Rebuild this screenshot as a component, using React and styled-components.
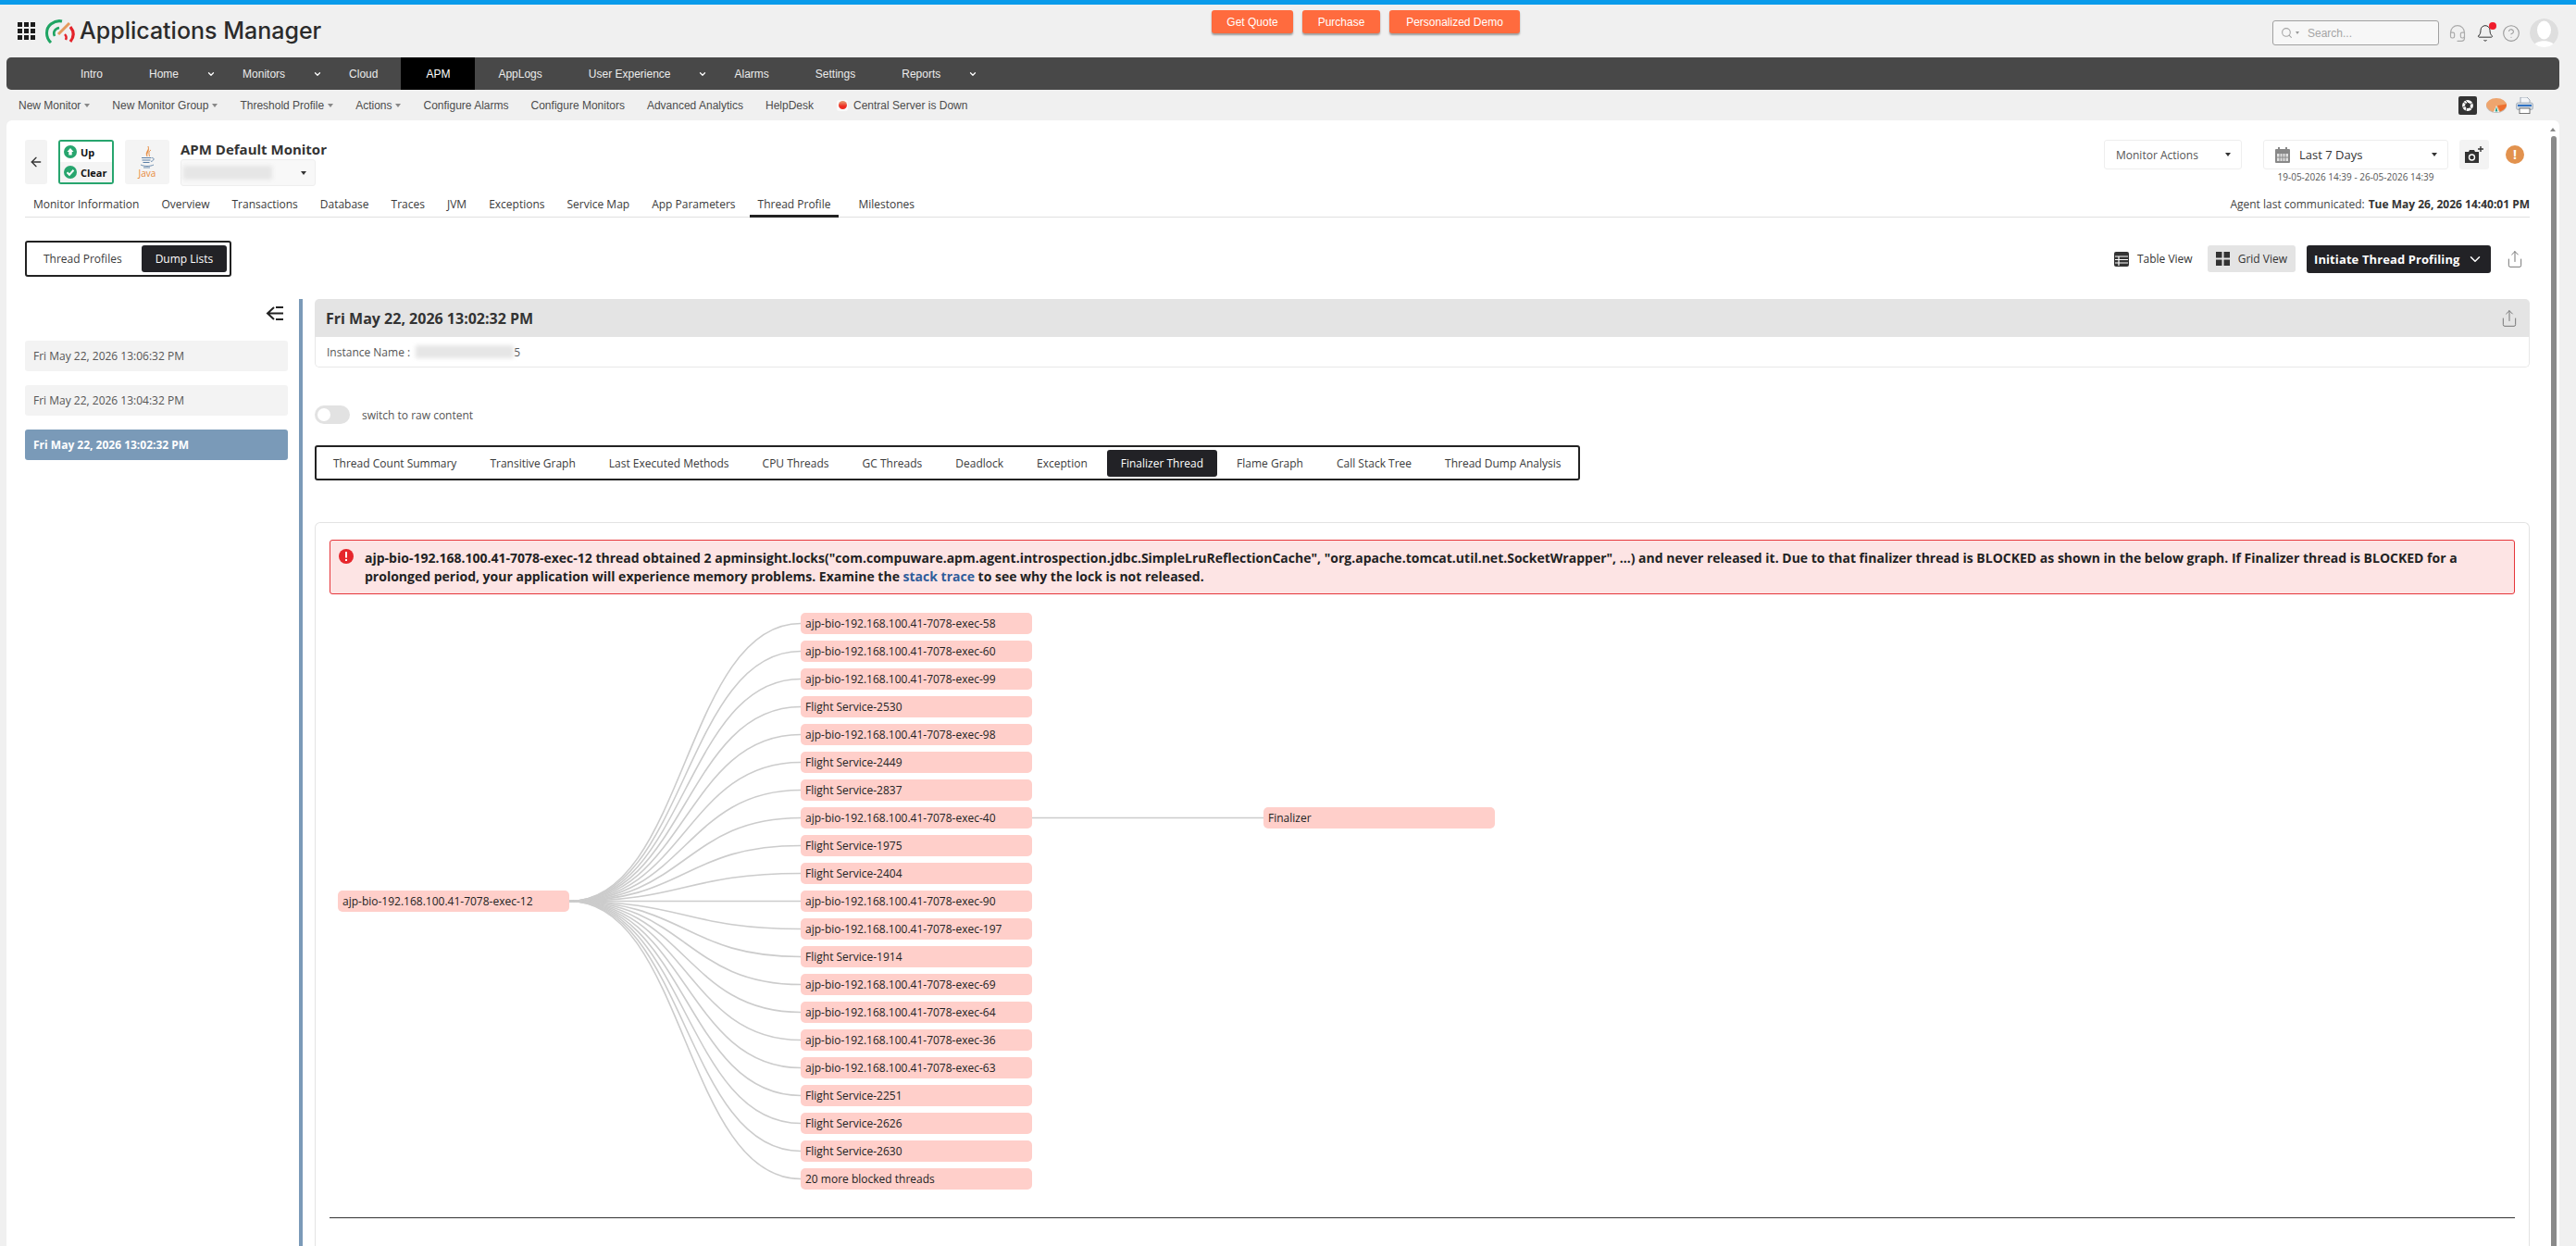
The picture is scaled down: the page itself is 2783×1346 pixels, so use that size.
import styled, { createGlobalStyle } from "styled-components";
import {
  ArrowLeft,
  Bell,
  ChevronDown,
  CircleHelp,
  Headset,
  Search,
  Share,
} from "lucide-react";

const GlobalStyle = createGlobalStyle`
  html, body {
    margin: 0;
    height: 100%;
    overflow: hidden;
  }
  body {
    font-family: "Open Sans", "Noto Sans", sans-serif;
    font-size: 12px;
    color: #333;
    background: #f0f0f0;
  }
  * {
    box-sizing: border-box;
  }
`;

const Page = styled.div`
  height: 1346px;
  display: flex;
  flex-direction: column;
  border-top: 5px solid #0a9bea;
  background: #f0f0f0;
`;

const Header = styled.header`
  height: 57px;
  flex: none;
  position: relative;
  display: flex;
  align-items: flex-start;
  justify-content: space-between;
`;

const Brand = styled.div`
  display: flex;
  align-items: center;
  padding: 13px 0 0 18px;
  gap: 11px;
`;

const BrandName = styled.div`
  font-family: Inter, "Liberation Sans", sans-serif;
  font-size: 25px;
  line-height: 30px;
  font-weight: 500;
  color: #2b2b2b;
  margin-left: -6px;
`;

const QuoteButtons = styled.div`
  position: absolute;
  left: 1309px;
  top: 6px;
  display: flex;
  gap: 10px;
`;

const QuoteButton = styled.button`
  height: 25px;
  width: ${(p) => p.$w}px;
  border: 0;
  border-radius: 3px;
  background: #ff6b3e;
  box-shadow: 0 2px 2px rgba(0, 0, 0, 0.35);
  color: #fff;
  font-family: "Liberation Sans", sans-serif;
  font-size: 12px;
  padding: 0;
`;

const Tools = styled.div`
  display: flex;
  align-items: center;
  padding: 15px 19px 0 0;
`;

const SearchBox = styled.div`
  width: 180px;
  height: 27px;
  border: 1px solid #a0a0a0;
  border-radius: 3px;
  background: #f7f7f7;
  display: flex;
  align-items: center;
  gap: 3px;
  padding-left: 8px;
  color: #a5a5a5;
  font-family: "Liberation Sans", sans-serif;
  font-size: 12px;
  margin-right: 10px;
`;

const SearchCaret = styled.i`
  width: 0;
  height: 0;
  margin-right: 6px;
  border-left: 2.5px solid transparent;
  border-right: 2.5px solid transparent;
  border-top: 3px solid #999;
`;

const ToolIcon = styled.span`
  position: relative;
  width: 20px;
  margin-right: ${(p) => p.$gap}px;
  display: flex;
  justify-content: center;
  color: ${(p) => p.$color};
`;

const BellDot = styled.i`
  position: absolute;
  right: -2px;
  top: -2px;
  width: 8px;
  height: 8px;
  border-radius: 50%;
  background: #f01c2c;
`;

const Avatar = styled.span`
  width: 31px;
  height: 31px;
  border-radius: 50%;
  overflow: hidden;
  display: block;
`;

const NavBar = styled.nav`
  height: 35px;
  flex: none;
  margin: 0 18px 0 7px;
  padding-left: 55px;
  background: #484848;
  border-radius: 5px;
  display: flex;
  align-items: stretch;
  font-family: "Liberation Sans", sans-serif;
  font-size: 12px;
  color: #f0f0f0;
`;

const NavItem = styled.div`
  display: flex;
  align-items: center;
  padding: 0 ${(p) => (p.$active ? 27 : 25)}px;
  background: ${(p) => (p.$active ? "#000" : "transparent")};
  color: ${(p) => (p.$active ? "#fff" : "#ececec")};
`;

const NavCaret = styled.div`
  width: 19px;
  display: flex;
  align-items: center;
  justify-content: center;
  color: #fff;
`;

const SubBar = styled.div`
  height: 33px;
  flex: none;
  padding: 0 46px 0 20px;
  display: flex;
  align-items: center;
  gap: 24px;
  font-family: "Liberation Sans", sans-serif;
  font-size: 12px;
  color: #4c4c4c;
`;

const SubItem = styled.div`
  display: flex;
  align-items: center;
  gap: 4px;
  white-space: nowrap;
`;

const SmallCaret = styled.i`
  width: 0;
  height: 0;
  border-left: 3.5px solid transparent;
  border-right: 3.5px solid transparent;
  border-top: 4px solid ${(p) => p.$color || "#888"};
`;

const ServerDot = styled.i`
  width: 12px;
  height: 12px;
  margin: 0 2px 0 1px;
  padding: 1.5px;
  border-radius: 3px;
  background: #fafafa;
  &::before {
    content: "";
    display: block;
    width: 9px;
    height: 9px;
    border-radius: 50%;
    background: linear-gradient(#e9926c 10%, #ee2a20 65%);
  }
`;

const SubIcons = styled.div`
  margin-left: auto;
  display: flex;
  align-items: center;
  gap: 10px;
`;

const Panel = styled.main`
  flex: 1;
  min-height: 0;
  position: relative;
  overflow: hidden;
  margin: 0 18px 0 7px;
  padding: 21px 32px 0 20px;
  background: #fff;
  border-radius: 6px 6px 0 0;
  display: flex;
  flex-direction: column;
`;

const ScrollArrow = styled.i`
  position: absolute;
  right: 4px;
  top: 8px;
  border-left: 3px solid transparent;
  border-right: 3px solid transparent;
  border-bottom: 4px solid #888;
`;

const ScrollBar = styled.div`
  position: absolute;
  right: 3px;
  top: 17px;
  bottom: 0;
  width: 6px;
  background: #8a8a8a;
  border-radius: 3px 3px 0 0;
`;

const MonitorHead = styled.div`
  height: 50px;
  flex: none;
  display: flex;
  justify-content: space-between;
`;

const HeadLeft = styled.div`
  display: flex;
  align-items: flex-start;
`;

const BackButton = styled.div`
  width: 24px;
  height: 48px;
  border-radius: 3px;
  background: #f3f3f3;
  color: #333;
  display: flex;
  align-items: center;
  justify-content: center;
  margin-right: 12px;
`;

const StatusBox = styled.div`
  width: 60px;
  height: 48px;
  border: 2px solid #27a56e;
  border-radius: 3px;
  margin-right: 12px;
  overflow: hidden;
`;

const StatusRow = styled.div`
  height: 22px;
  display: flex;
  align-items: center;
  gap: 4px;
  padding-left: 4px;
  font-size: 11px;
  font-weight: 700;
  color: #111;
  background: ${(p) => (p.$shade ? "#f4f4f4" : "#fff")};
`;

const JavaBox = styled.div`
  width: 48px;
  height: 48px;
  border-radius: 3px;
  background: #f4f4f4;
  margin-right: 12px;
  display: flex;
  flex-direction: column;
  align-items: center;
  padding-top: 7px;
`;

const JavaLabel = styled.span`
  font-size: 10px;
  line-height: 10px;
  font-weight: 500;
  color: #e8893a;
`;

const MonitorTitle = styled.div`
  font-size: 15px;
  line-height: 18px;
  font-weight: 700;
  color: #333;
  margin: 1px 0 2px;
`;

const MonitorSelect = styled.div`
  width: 146px;
  height: 29px;
  border: 1px solid #eee;
  border-radius: 3px;
  background: #f8f8f8;
  display: flex;
  align-items: center;
  justify-content: space-between;
  padding: 0 9px 0 2px;
`;

const Blurred = styled.span`
  display: block;
  width: ${(p) => p.$w}px;
  height: ${(p) => p.$h}px;
  background: #e6e6e6;
  filter: blur(2px);
`;

const HeadRight = styled.div`
  display: flex;
  align-items: flex-start;
`;

const SelectBox = styled.div`
  width: ${(p) => p.$w}px;
  height: 32px;
  border: 1px solid #eee;
  border-radius: 3px;
  display: flex;
  align-items: center;
  gap: 10px;
  padding: 0 11px 0 12px;
  font-size: ${(p) => p.$size || 12}px;
  color: ${(p) => p.$color || "#555"};
`;

const Grow = styled.span`
  flex: 1;
`;

const DateColumn = styled.div`
  display: flex;
  flex-direction: column;
  align-items: center;
  margin-left: 23px;
`;

const DateRange = styled.div`
  font-size: 10px;
  line-height: 14px;
  margin-top: 1px;
  color: #555;
`;

const CameraButton = styled.div`
  width: 32px;
  height: 32px;
  margin-left: 12px;
  padding: 6px;
  border-radius: 3px;
  background: #f3f3f3;
  display: flex;
`;

const WarnDot = styled.div`
  width: 20px;
  height: 20px;
  margin: 6px 6px 0 18px;
  border-radius: 50%;
  background: #e2924e;
  color: #fff;
  font-size: 14px;
  line-height: 20px;
  font-weight: 700;
  text-align: center;
`;

const TabsRow = styled.div`
  margin-top: 6px;
  height: 28px;
  flex: none;
  border-bottom: 1px solid #e0e0e0;
  display: flex;
  align-items: stretch;
`;

const MonitorTab = styled.div`
  display: flex;
  align-items: center;
  padding: 2px 9px 0;
  margin-right: ${(p) => (p.$active ? 12 : 6)}px;
  height: 28px;
  font-size: 12px;
  color: #3a3a3a;
  white-space: nowrap;
  border-bottom: 3px solid ${(p) => (p.$active ? "#222" : "transparent")};
`;

const AgentText = styled.div`
  margin-left: auto;
  display: flex;
  align-items: center;
  gap: 4px;
  color: #444;
  font-size: 12px;
  b {
    color: #333;
    font-weight: 700;
  }
`;

const ToolRow = styled.div`
  margin-top: 25px;
  height: 39px;
  flex: none;
  display: flex;
  align-items: center;
  justify-content: space-between;
`;

const Segments = styled.div`
  display: flex;
  width: fit-content;
  align-items: center;
  height: ${(p) => p.$h}px;
  padding: 0 3px;
  border: 2px solid #222;
  border-radius: 3px;
  gap: 6px;
`;

const Segment = styled.div`
  height: 29px;
  padding: 0 15px;
  border-radius: 3px;
  display: flex;
  align-items: center;
  white-space: nowrap;
  font-size: 12px;
  background: ${(p) => (p.$active ? "#222226" : "transparent")};
  color: ${(p) => (p.$active ? "#fff" : "#3a3a3a")};
`;

const ViewTools = styled.div`
  display: flex;
  align-items: center;
`;

const ViewButton = styled.div`
  height: 29px;
  display: flex;
  align-items: center;
  gap: 9px;
  padding: 0 9px;
  margin-right: ${(p) => p.$gap}px;
  border-radius: 3px;
  font-size: 12px;
  color: #333;
  background: ${(p) => (p.$active ? "#e4e4e4" : "transparent")};
`;

const InitiateButton = styled.div`
  width: 199px;
  height: 30px;
  border-radius: 3px;
  background: #222226;
  color: #fff;
  font-size: 13px;
  letter-spacing: 0.1px;
  font-weight: 700;
  display: flex;
  align-items: center;
  justify-content: space-between;
  padding: 0 8px;
`;

const ShareWrap = styled.span`
  display: flex;
  color: #777;
  margin-left: ${(p) => p.$left || 0}px;
  margin-right: ${(p) => p.$right || 0}px;
`;

const Workspace = styled.div`
  margin-top: 24px;
  flex: 1;
  min-height: 0;
  display: flex;
  align-items: stretch;
`;

const Sidebar = styled.aside`
  width: 284px;
  flex: none;
  margin-right: 12px;
`;

const CollapseRow = styled.div`
  height: 45px;
  display: flex;
  justify-content: flex-end;
  padding: 7px 4px 0 0;
`;

const DumpItem = styled.div`
  height: 33px;
  margin-bottom: 15px;
  padding-left: 9px;
  border-radius: 3px;
  display: flex;
  align-items: center;
  font-size: 12px;
  font-weight: ${(p) => (p.$active ? 700 : 400)};
  background: ${(p) => (p.$active ? "#7a9ab8" : "#f3f3f3")};
  color: ${(p) => (p.$active ? "#fff" : "#555")};
`;

const Detail = styled.section`
  flex: 1;
  min-width: 0;
  border-left: 4px solid #7b9ab8;
  padding-left: 13px;
  display: flex;
  flex-direction: column;
`;

const DetailHead = styled.div`
  height: 41px;
  flex: none;
  padding: 0 12px;
  background: #e4e4e4;
  border-radius: 5px 5px 0 0;
  display: flex;
  align-items: center;
  justify-content: space-between;
  font-size: 16px;
  font-weight: 700;
  color: #333;
`;

const InstanceRow = styled.div`
  height: 33px;
  flex: none;
  padding: 0 12px;
  border: 1px solid #e8e8e8;
  border-top: 0;
  border-radius: 0 0 5px 5px;
  display: flex;
  align-items: center;
  gap: 6px;
  font-size: 12px;
  color: #555;
`;

const InstanceTail = styled.span`
  margin-left: -6px;
`;

const SwitchRow = styled.div`
  margin-top: 41px;
  height: 20px;
  flex: none;
  display: flex;
  align-items: center;
  gap: 13px;
  font-size: 12px;
  color: #555;
`;

const SwitchTrack = styled.div`
  width: 38px;
  height: 20px;
  padding: 3px;
  border-radius: 10px;
  background: #e2e2e2;
`;

const SwitchKnob = styled.div`
  width: 14px;
  height: 14px;
  border-radius: 50%;
  background: #fff;
`;

const AnalysisTabs = styled.div`
  margin-top: 23px;
  flex: none;
`;

const GraphCard = styled.div`
  margin-top: 45px;
  flex: 1;
  min-height: 0;
  padding: 18px 15px 0;
  border: 1px solid #e3e3e3;
  border-bottom: 0;
  border-radius: 6px 6px 0 0;
`;

const AlertBox = styled.div`
  height: 59px;
  padding: 0 10px 0 37px;
  position: relative;
  display: flex;
  align-items: center;
  background: #fde4e4;
  border: 1px solid #e6353a;
  border-radius: 3px;
  font-size: 14px;
  line-height: 20px;
  font-weight: 700;
  color: #222;
  a {
    color: #2f5d9b;
  }
`;

const AlertIcon = styled.svg`
  position: absolute;
  left: 9px;
  top: 9px;
`;

const Graph = styled.div`
  position: relative;
  margin-top: 20px;
  padding-left: 9px;
  display: flex;
  gap: 250px;
`;

const Links = styled.svg`
  position: absolute;
  left: 9px;
  top: 0;
  z-index: 0;
`;

const NodeColumn = styled.div`
  width: 250px;
  position: relative;
  z-index: 1;
  display: flex;
  flex-direction: column;
  gap: 7px;
  justify-content: ${(p) => (p.$center ? "center" : "flex-start")};
  padding-top: ${(p) => p.$top || 0}px;
`;

const Node = styled.div`
  height: 23px;
  padding-left: 5px;
  display: flex;
  align-items: center;
  border-radius: 5px;
  background: #ffcfca;
  font-size: 12px;
  color: #222;
  white-space: nowrap;
`;

const Divider = styled.div`
  margin-top: 30px;
  height: 1px;
  background: #333;
`;

const navItems = [
  { label: "Intro" },
  { label: "Home", caret: true },
  { label: "Monitors", caret: true },
  { label: "Cloud" },
  { label: "APM", active: true },
  { label: "AppLogs" },
  { label: "User Experience", caret: true },
  { label: "Alarms" },
  { label: "Settings" },
  { label: "Reports", caret: true },
];

const subItems = [
  { label: "New Monitor", caret: true },
  { label: "New Monitor Group", caret: true },
  { label: "Threshold Profile", caret: true },
  { label: "Actions", caret: true },
  { label: "Configure Alarms" },
  { label: "Configure Monitors" },
  { label: "Advanced Analytics" },
  { label: "HelpDesk" },
];

const monitorTabs = [
  "Monitor Information",
  "Overview",
  "Transactions",
  "Database",
  "Traces",
  "JVM",
  "Exceptions",
  "Service Map",
  "App Parameters",
  "Thread Profile",
  "Milestones",
];

const analysisTabs = [
  "Thread Count Summary",
  "Transitive Graph",
  "Last Executed Methods",
  "CPU Threads",
  "GC Threads",
  "Deadlock",
  "Exception",
  "Finalizer Thread",
  "Flame Graph",
  "Call Stack Tree",
  "Thread Dump Analysis",
];

const blockedThreads = [
  "ajp-bio-192.168.100.41-7078-exec-58",
  "ajp-bio-192.168.100.41-7078-exec-60",
  "ajp-bio-192.168.100.41-7078-exec-99",
  "Flight Service-2530",
  "ajp-bio-192.168.100.41-7078-exec-98",
  "Flight Service-2449",
  "Flight Service-2837",
  "ajp-bio-192.168.100.41-7078-exec-40",
  "Flight Service-1975",
  "Flight Service-2404",
  "ajp-bio-192.168.100.41-7078-exec-90",
  "ajp-bio-192.168.100.41-7078-exec-197",
  "Flight Service-1914",
  "ajp-bio-192.168.100.41-7078-exec-69",
  "ajp-bio-192.168.100.41-7078-exec-64",
  "ajp-bio-192.168.100.41-7078-exec-36",
  "ajp-bio-192.168.100.41-7078-exec-63",
  "Flight Service-2251",
  "Flight Service-2626",
  "Flight Service-2630",
  "20 more blocked threads",
];

const ROW = 30;
const rowY = (i) => 11.5 + ROW * i;
const rootY = rowY(10);

const AppGrid = () => (
  <svg width="20" height="20" viewBox="0 0 20 20" fill="#1c1c1c">
    {[0, 7, 14].map((y) =>
      [0, 7, 14].map((x) => <rect key={`${x}-${y}`} x={x + 1} y={y + 1} width="5" height="5" />)
    )}
  </svg>
);

const Logo = () => (
  <svg width="32" height="27" viewBox="0 0 32 27" fill="none">
    <path d="M6 26C0 20 0 11 6 6C10 3 14 2 18 3" stroke="#1fa463" strokeWidth="3" />
    <path d="M10 19C8 15 10 11 15 10" stroke="#1fa463" strokeWidth="2.6" />
    <path d="M14 17L26 5" stroke="#e59a5c" strokeWidth="3" />
    <path d="M27 9C31 14 31 20 27 25" stroke="#e4232b" strokeWidth="3.2" />
    <path d="M21 17C23 19 23 21 22 23" stroke="#e4232b" strokeWidth="2.4" />
  </svg>
);

const UpIcon = () => (
  <svg width="14" height="14" viewBox="0 0 14 14">
    <circle cx="7" cy="7" r="7" fill="#27a56e" />
    <path d="M7 3L10.5 7H8.7V10.5H5.3V7H3.5Z" fill="#fff" />
  </svg>
);

const CheckIcon = () => (
  <svg width="14" height="14" viewBox="0 0 14 14" fill="none">
    <circle cx="7" cy="7" r="7" fill="#27a56e" />
    <path d="M3.5 7.2L6 9.7L10.5 4.8" stroke="#fff" strokeWidth="2" />
  </svg>
);

const JavaCup = () => (
  <svg width="18" height="24" viewBox="0 0 18 24" fill="none">
    <path d="M10 0C12 4 6 6 9 11C8 7 12 6 10 0Z" fill="#e8893a" stroke="#e8893a" strokeWidth="0.6" />
    <path d="M13 4C10 6 11 8 11.5 11" stroke="#e8893a" strokeWidth="0.9" />
    <path d="M3 12.5H13M3.5 15H12.5M4.5 17.5H11.5" stroke="#5b7fa6" strokeWidth="1" />
    <path d="M13.5 12.5C17 12 17 15.5 13 16.5M2 20C6 22 12 22 16 20M5 23H12" stroke="#5b7fa6" strokeWidth="0.9" />
  </svg>
);

const TinyCaret = () => <SmallCaret $color="#333" />;

const CalendarIcon = () => (
  <svg width="16" height="17" viewBox="0 0 16 17" fill="#888">
    <rect x="0" y="2" width="16" height="15" rx="1" />
    <rect x="3" y="0" width="2" height="4" />
    <rect x="11" y="0" width="2" height="4" />
    <path d="M2 7H14V15H2Z" fill="#fff" opacity="0.75" />
    <path d="M5 7V15M8 7V15M11 7V15M2 11H14" stroke="#888" strokeWidth="1" />
  </svg>
);

const CameraPlus = () => (
  <svg width="20" height="20" viewBox="0 0 20 20">
    <path d="M0 7H4L5 5H10L11 7H15V19H0Z" fill="#333" />
    <circle cx="7.5" cy="13" r="3" fill="none" stroke="#fff" strokeWidth="1.4" />
    <path d="M17 1V7M14 4H20" stroke="#333" strokeWidth="1.4" />
  </svg>
);

const TableIcon = () => (
  <svg width="16" height="16" viewBox="0 0 16 16" fill="#333">
    <path d="M2 0H14Q16 0 16 2V14Q16 16 14 16H2Q0 16 0 14V2Q0 0 2 0Z" />
    <path d="M1 5H15M1 8.5H15M1 12H15M5 5V15" stroke="#fff" strokeWidth="1.2" />
  </svg>
);

const GridIcon = () => (
  <svg width="15" height="15" viewBox="0 0 15 15" fill="#333">
    <rect width="6.5" height="6.5" />
    <rect x="8.5" width="6.5" height="6.5" />
    <rect y="8.5" width="6.5" height="6.5" />
    <rect x="8.5" y="8.5" width="6.5" height="6.5" />
  </svg>
);

const CollapseIcon = () => (
  <svg width="20" height="17" viewBox="0 0 20 17" fill="none" stroke="#222" strokeWidth="2">
    <path d="M9 2L2 8.5L9 15M2 8.5H19M11 2H19M11 15H19" />
  </svg>
);

const SnapIcon = () => (
  <svg width="20" height="20" viewBox="0 0 20 20">
    <rect width="20" height="20" rx="2" fill="#333" />
    <circle cx="10" cy="10" r="4.4" fill="none" stroke="#fff" strokeWidth="3" />
    <path d="M7 4L11 8M15.5 7.5L11 9M15 14L11 11M8 16L9 11.5M4.5 12L9 10M5 6L9 9" stroke="#333" strokeWidth="0.8" />
  </svg>
);

const PieIcon = () => (
  <svg width="22" height="16" viewBox="0 0 22 16">
    <ellipse cx="11" cy="8.5" rx="11" ry="7.5" fill="#bdbdbd" />
    <ellipse cx="11" cy="7.5" rx="11" ry="7.5" fill="#eea56e" />
    <path d="M12 8L22 6.5C22 10 19 13 15 14.5Z" fill="#ee6f2e" />
    <path d="M11 8L8 15H14Z" fill="#fff" />
    <path d="M11 9L9.5 14.5H12.5Z" fill="#27a08c" />
  </svg>
);

const PrintIcon = () => (
  <svg width="19" height="18" viewBox="0 0 19 18">
    <path d="M5 0H12L15 3V8H5Z" fill="#f4f6f9" stroke="#8a97a6" strokeWidth="0.8" />
    <rect x="0.5" y="6" width="18" height="7.5" rx="2" fill="#cfd6de" stroke="#8a97a6" strokeWidth="0.6" />
    <path d="M2 9H17" stroke="#2f72c4" strokeWidth="2" />
    <rect x="4" y="12" width="11" height="5.6" fill="#fff" stroke="#555" strokeWidth="0.8" />
  </svg>
);

const AvatarFace = () => (
  <svg width="31" height="31" viewBox="0 0 31 31">
    <circle cx="15.5" cy="15.5" r="15.5" fill="#dedede" />
    <ellipse cx="15.5" cy="12.5" rx="7.5" ry="10" fill="#fff" />
    <path d="M3 31C5 22 26 22 28 31Z" fill="#fff" />
  </svg>
);

const linkPath = (y1, y2) => `M250 ${y1}C375 ${y1} 375 ${y2} 500 ${y2}`;

function NavGroup({ item }) {
  return (
    <>
      <NavItem $active={item.active}>{item.label}</NavItem>
      {item.caret && (
        <NavCaret>
          <ChevronDown size={10} strokeWidth={3} />
        </NavCaret>
      )}
    </>
  );
}

const App = () => (
  <Page>
    <GlobalStyle />
    <Header>
      <Brand>
        <AppGrid />
        <Logo />
        <BrandName>Applications Manager</BrandName>
      </Brand>
      <QuoteButtons>
        <QuoteButton $w={88}>Get Quote</QuoteButton>
        <QuoteButton $w={84}>Purchase</QuoteButton>
        <QuoteButton $w={141}>Personalized Demo</QuoteButton>
      </QuoteButtons>
      <Tools>
        <SearchBox>
          <Search size={13} />
          <SearchCaret />
          Search...
        </SearchBox>
        <ToolIcon $gap={10} $color="#aaa">
          <Headset size={20} strokeWidth={1.4} />
        </ToolIcon>
        <ToolIcon $gap={8} $color="#222">
          <Bell size={20} strokeWidth={1.1} />
          <BellDot />
        </ToolIcon>
        <ToolIcon $gap={10} $color="#999">
          <CircleHelp size={22} strokeWidth={1.3} />
        </ToolIcon>
        <Avatar>
          <AvatarFace />
        </Avatar>
      </Tools>
    </Header>

    <NavBar>
      {navItems.map((item) => (
        <NavGroup key={item.label} item={item} />
      ))}
    </NavBar>

    <SubBar>
      {subItems.map((item) => (
        <SubItem key={item.label}>
          {item.label}
          {item.caret && <SmallCaret />}
        </SubItem>
      ))}
      <SubItem>
        <ServerDot />
        Central Server is Down
      </SubItem>
      <SubIcons>
        <SnapIcon />
        <PieIcon />
        <PrintIcon />
      </SubIcons>
    </SubBar>

    <Panel>
      <ScrollArrow />
      <ScrollBar />
      <MonitorHead>
        <HeadLeft>
          <BackButton>
            <ArrowLeft size={16} />
          </BackButton>
          <StatusBox>
            <StatusRow>
              <UpIcon />
              Up
            </StatusRow>
            <StatusRow $shade>
              <CheckIcon />
              Clear
            </StatusRow>
          </StatusBox>
          <JavaBox>
            <JavaCup />
            <JavaLabel>Java</JavaLabel>
          </JavaBox>
          <div>
            <MonitorTitle>APM Default Monitor</MonitorTitle>
            <MonitorSelect>
              <Blurred $w={96} $h={15} />
              <TinyCaret />
            </MonitorSelect>
          </div>
        </HeadLeft>
        <HeadRight>
          <SelectBox $w={149}>
            Monitor Actions
            <Grow />
            <TinyCaret />
          </SelectBox>
          <DateColumn>
            <SelectBox $w={200} $size={13} $color="#333">
              <CalendarIcon />
              Last 7 Days
              <Grow />
              <TinyCaret />
            </SelectBox>
            <DateRange>19-05-2026 14:39 - 26-05-2026 14:39</DateRange>
          </DateColumn>
          <CameraButton>
            <CameraPlus />
          </CameraButton>
          <WarnDot>!</WarnDot>
        </HeadRight>
      </MonitorHead>

      <TabsRow>
        {monitorTabs.map((tab) => (
          <MonitorTab key={tab} $active={tab === "Thread Profile"}>
            {tab}
          </MonitorTab>
        ))}
        <AgentText>
          Agent last communicated: <b>Tue May 26, 2026 14:40:01 PM</b>
        </AgentText>
      </TabsRow>

      <ToolRow>
        <Segments $h={39}>
          <Segment>Thread Profiles</Segment>
          <Segment $active>Dump Lists</Segment>
        </Segments>
        <ViewTools>
          <ViewButton $gap={7}>
            <TableIcon />
            Table View
          </ViewButton>
          <ViewButton $gap={12} $active>
            <GridIcon />
            Grid View
          </ViewButton>
          <InitiateButton>
            Initiate Thread Profiling
            <ChevronDown size={18} />
          </InitiateButton>
          <ShareWrap $left={16} $right={6}>
            <Share size={20} strokeWidth={1.2} />
          </ShareWrap>
        </ViewTools>
      </ToolRow>

      <Workspace>
        <Sidebar>
          <CollapseRow>
            <CollapseIcon />
          </CollapseRow>
          <DumpItem>Fri May 22, 2026 13:06:32 PM</DumpItem>
          <DumpItem>Fri May 22, 2026 13:04:32 PM</DumpItem>
          <DumpItem $active>Fri May 22, 2026 13:02:32 PM</DumpItem>
        </Sidebar>

        <Detail>
          <DetailHead>
            Fri May 22, 2026 13:02:32 PM
            <ShareWrap>
              <Share size={20} strokeWidth={1.2} />
            </ShareWrap>
          </DetailHead>
          <InstanceRow>
            Instance Name :
            <Blurred $w={106} $h={14} />
            <InstanceTail>5</InstanceTail>
          </InstanceRow>

          <SwitchRow>
            <SwitchTrack>
              <SwitchKnob />
            </SwitchTrack>
            switch to raw content
          </SwitchRow>

          <AnalysisTabs>
            <Segments $h={38}>
              {analysisTabs.map((tab) => (
                <Segment key={tab} $active={tab === "Finalizer Thread"}>
                  {tab}
                </Segment>
              ))}
            </Segments>
          </AnalysisTabs>

          <GraphCard>
            <AlertBox>
              <AlertIcon width="16" height="16" viewBox="0 0 16 16">
                <circle cx="8" cy="8" r="8" fill="#e6262c" />
                <rect x="7" y="3" width="2" height="6.5" fill="#fff" />
                <rect x="7" y="11" width="2" height="2" fill="#fff" />
              </AlertIcon>
              <div>
                ajp-bio-192.168.100.41-7078-exec-12 thread obtained 2 apminsight.locks("com.compuware.apm.agent.introspection.jdbc.SimpleLruReflectionCache", "org.apache.tomcat.util.net.SocketWrapper", ...) and never released it. Due to that finalizer thread is BLOCKED as shown in the below graph. If Finalizer thread is BLOCKED for a prolonged period, your application will experience memory problems. Examine the{" "}
                <a>stack trace</a> to see why the lock is not released.
              </div>
            </AlertBox>

            <Graph>
              <Links width="1250" height="640" fill="none" stroke="#ccc" strokeWidth="1.6">
                {blockedThreads.map((name, i) => (
                  <path key={name} d={linkPath(rootY, rowY(i))} />
                ))}
                <path d={`M750 ${rowY(7)}H1000`} />
              </Links>
              <NodeColumn $center>
                <Node>ajp-bio-192.168.100.41-7078-exec-12</Node>
              </NodeColumn>
              <NodeColumn>
                {blockedThreads.map((name) => (
                  <Node key={name}>{name}</Node>
                ))}
              </NodeColumn>
              <NodeColumn $top={ROW * 7}>
                <Node>Finalizer</Node>
              </NodeColumn>
            </Graph>

            <Divider />
          </GraphCard>
        </Detail>
      </Workspace>
    </Panel>
  </Page>
);

export default App;
